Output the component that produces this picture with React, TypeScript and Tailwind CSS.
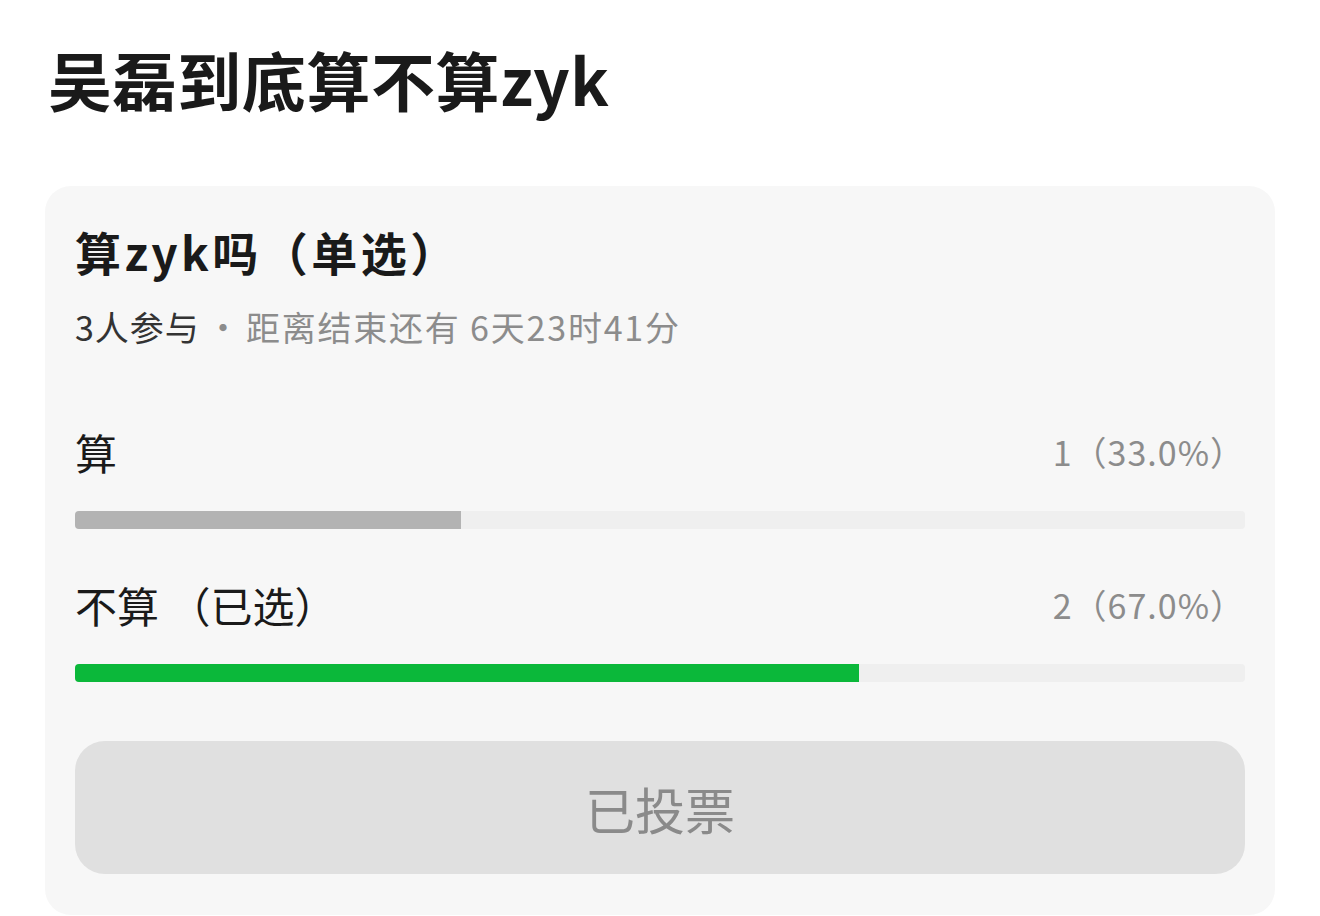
const font = { fontFamily: '"Noto Sans CJK SC", "Noto Sans", sans-serif' };

type Option = {
  label: string;
  count: number;
  percent: number;
  selected?: boolean;
};

const options: Option[] = [
  { label: '算', count: 1, percent: 33.0 },
  { label: '不算 （已选）', count: 2, percent: 67.0, selected: true },
];

function OptionRow({ option, first }: { option: Option; first: boolean }) {
  return (
    <div className={first ? 'mt-[87px]' : 'mt-[55px]'}>
      <div className="flex items-center justify-between">
        <span className="text-[42px] leading-none text-[#1a1a1a]">{option.label}</span>
        <span className="text-[34px] leading-none tracking-[1px] text-[#8c8c8c]">
          {option.count}（{option.percent.toFixed(1)}%）
        </span>
      </div>
      <div className="mt-[38px] h-[18px] w-full overflow-hidden rounded-[4px] bg-[#efefef]">
        <div
          className={option.selected ? 'h-full bg-[#0bb83a]' : 'h-full bg-[#b3b3b3]'}
          style={{ width: `${option.percent}%` }}
        />
      </div>
    </div>
  );
}

export default function App() {
  return (
    <div className="h-[916px] w-full overflow-hidden bg-white px-[45px]" style={font}>
      <h1 className="pl-[3px] pt-[46px] text-[64px] font-bold leading-none tracking-[0.6px] text-[#1a1a1a]">
        吴磊到底算不算zyk
      </h1>

      <div className="mt-[76px] rounded-[26px] bg-[#f7f7f7] px-[30px] pb-[41px] pt-[42px]">
        <h2 className="text-[46px] font-bold leading-none tracking-[3.5px] text-[#1a1a1a]">
          算zyk吗（单选）
        </h2>
        <p className="mt-[36px] flex items-center text-[34px] leading-none">
          <span className="tracking-[1px] text-[#333333]">3人参与</span>
          <span className="px-[6px] text-[#8c8c8c]">·</span>
          <span className="tracking-[1.8px] text-[#8c8c8c]">距离结束还有 6天23时41分</span>
        </p>

        {options.map((o, i) => (
          <OptionRow key={o.label} option={o} first={i === 0} />
        ))}

        <button className="mt-[59px] flex h-[133px] w-full items-center justify-center rounded-[30px] bg-[#e0e0e0] text-[50px] leading-none text-[#8a8a8a]">
          已投票
        </button>
      </div>
    </div>
  );
}
